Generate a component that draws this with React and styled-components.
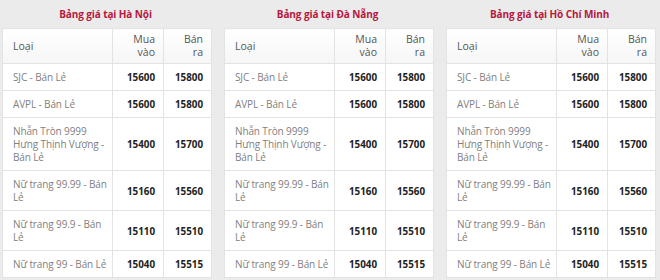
import React from "react";
import styled, { createGlobalStyle } from "styled-components";

const Global = createGlobalStyle`
  html, body { margin: 0; padding: 0; background: #ebebeb; }
  body { font-family: "Open Sans", "Noto Sans", sans-serif; font-size: 10px; color: #777; }
`;

const Page = styled.div`
  display: flex;
  gap: 15px;
  padding: 0 0 0 2px;
  width: 660px;
  height: 280px;
  overflow: hidden;
  box-sizing: border-box;
`;

const Column = styled.section`
  width: 207px;
  flex: none;
`;

const Title = styled.h3`
  margin: 0;
  padding: 7px 0 0;
  height: 22px;
  box-sizing: border-box;
  text-align: center;
  font-size: 10px;
  letter-spacing: -0.1px;
  line-height: 15px;
  font-weight: 700;
  color: #b5173d;
`;

const Table = styled.table`
  width: 207px;
  margin-top: 6px;
  border-collapse: collapse;
  table-layout: fixed;
  background: #fff;
  border: 1px solid #e3e3e3;
`;

const Th = styled.th`
  width: ${(p) => p.$w}px;
  padding: 4px ${(p) => (p.$right ? 8 : 0)}px 4px ${(p) => (p.$right ? 8 : 10)}px;
  text-align: ${(p) => (p.$right ? "right" : "left")};
  font-weight: 400;
  font-size: 10.5px;
  line-height: 13px;
  color: #555;
  background: linear-gradient(#ffffff, #f6f6f6);
  border: 1px solid #e3e3e3;
  height: 26px;
  box-sizing: content-box;
`;

const Td = styled.td`
  padding: 7px ${(p) => (p.$num ? 8 : 2)}px 6px 10px;
  text-align: ${(p) => (p.$num ? "right" : "left")};
  font-weight: ${(p) => (p.$num ? 700 : 400)};
  color: ${(p) => (p.$num ? "#222" : "#7f7f7f")};
  font-size: ${(p) => (p.$num ? 9.8 : 10)}px;
  letter-spacing: ${(p) => (p.$num ? 0 : -0.12)}px;
  line-height: 13px;
  border: 1px solid #e3e3e3;
  vertical-align: middle;
`;

const rows = [
  ["SJC - Bán Lẻ", "15600", "15800"],
  ["AVPL - Bán Lẻ", "15600", "15800"],
  ["Nhẫn Tròn 9999 Hưng Thịnh Vượng - Bán Lẻ", "15400", "15700"],
  ["Nữ trang 99.99 - Bán Lẻ", "15160", "15560"],
  ["Nữ trang 99.9 - Bán Lẻ", "15110", "15510"],
  ["Nữ trang 99 - Bán Lẻ", "15040", "15515"],
];

const cities = ["Hà Nội", "Đà Nẵng", "Hồ Chí Minh"];

function PriceTable({ city }) {
  return (
    <Column>
      <Title>Bảng giá tại {city}</Title>
      <Table>
        <thead>
          <tr>
            <Th $w={99}>Loại</Th>
            <Th $w={34} $right>Mua vào</Th>
            <Th $w={31} $right>Bán ra</Th>
          </tr>
        </thead>
        <tbody>
          {rows.map((r) => (
            <tr key={r[0]}>
              <Td>{r[0]}</Td>
              <Td $num>{r[1]}</Td>
              <Td $num>{r[2]}</Td>
            </tr>
          ))}
        </tbody>
      </Table>
    </Column>
  );
}

export default function App() {
  return (
    <>
      <Global />
      <Page>
        {cities.map((c) => (
          <PriceTable key={c} city={c} />
        ))}
      </Page>
    </>
  );
}
